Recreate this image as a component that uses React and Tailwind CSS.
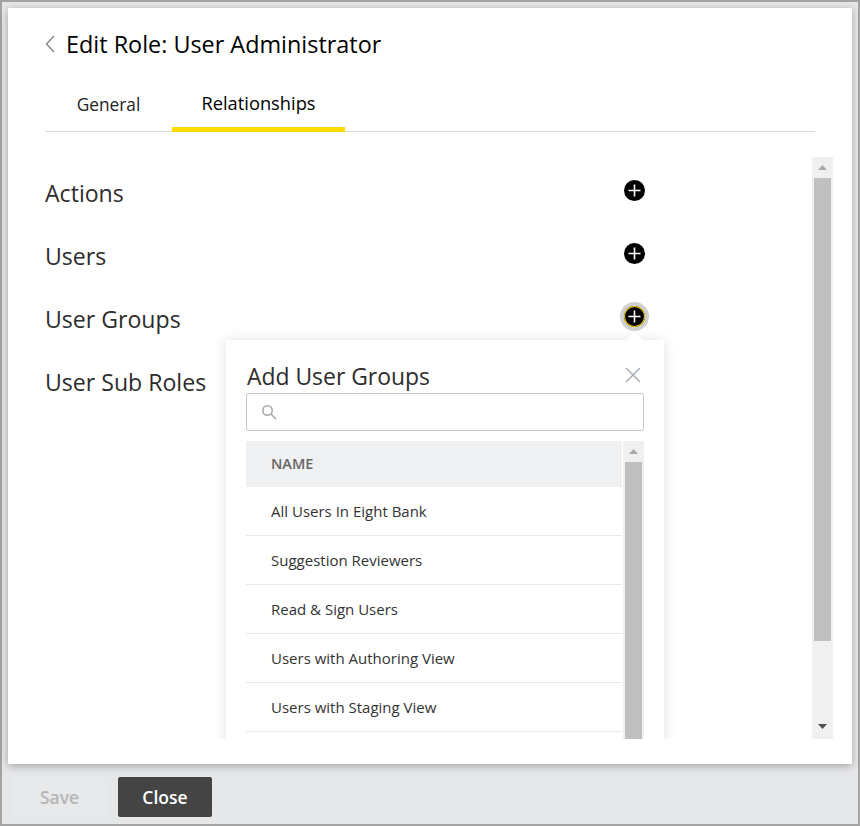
import React from "react";

function Plus({ active }) {
  return (
    <span
      className={
        "flex h-[21px] w-[21px] items-center justify-center rounded-full bg-black mb-[6px] " +
        (active ? "shadow-[inset_0_0_0_1px_#ffd400,0_0_0_4px_#d0d0d0]" : "")
      }
    >
      <svg width="13" height="13" viewBox="0 0 13 13" fill="none" stroke="#fff" strokeWidth="1.6">
        <path d="M6.5 0.5v12M0.5 6.5h12" />
      </svg>
    </span>
  );
}

function Row({ label, active }) {
  return (
    <div className="flex h-[63px] w-[600px] items-center justify-between">
      <span className="text-[23.1px] font-medium text-[#2d2d2d]">{label}</span>
      <Plus active={active} />
    </div>
  );
}

function Arrow({ down, color }) {
  return (
    <svg width="9" height="5" viewBox="0 0 9 5" fill={color}>
      <path d={down ? "M0 0h9L4.5 5z" : "M0 5h9L4.5 0z"} />
    </svg>
  );
}

const groups = [
  "All Users In Eight Bank",
  "Suggestion Reviewers",
  "Read & Sign Users",
  "Users with Authoring View",
  "Users with Staging View",
  "",
];

export default function App() {
  return (
    <div className="flex h-[826px] w-[860px] flex-col border-2 border-[#a3a3a3] bg-[#e6e7e9] font-['Open_Sans',sans-serif]">
      <div className="mx-[6px] mt-[6px] flex h-[756px] flex-col bg-white px-[37px] shadow-[0_2px_8px_rgba(0,0,0,0.3)]">
        <div className="mt-[20px] flex h-[32px] items-center">
          <svg width="10" height="18" viewBox="0 0 10 18" fill="none" stroke="#8a8a8a" strokeWidth="1.5" className="mr-[11px]">
            <path d="M9 1 1.5 9 9 17" />
          </svg>
          <h1 className="text-[23.4px] font-medium leading-[32px] text-black">Edit Role: User Administrator</h1>
        </div>
        <div className="mt-[27px] flex h-[45px] w-[770px] border-b border-[#d8d8d8]">
          <div className="flex w-[127px] justify-center pt-[5px] text-[17.3px] text-[#222]">General</div>
          <div className="flex h-[45px] w-[173px] justify-center border-b-[5px] border-[#ffdb00] pt-[2px] text-[18.3px] font-medium text-black">Relationships</div>
        </div>
        <div className="relative mt-[25px] flex h-[582px] w-[788px] justify-between overflow-hidden">
          <div className="pt-[5px]">
            <Row label="Actions" />
            <Row label="Users" />
            <Row label="User Groups" active />
            <Row label="User Sub Roles" />
          </div>
          <div className="flex w-[21px] flex-col items-center bg-[#f0f0f0]">
            <div className="flex h-[21px] items-center justify-center">
              <Arrow color="#a8a8a8" />
            </div>
            <div className="h-[463px] w-[17px] bg-[#c0c0c0]" />
            <div className="mt-auto mb-[10px] flex justify-center">
              <Arrow down color="#505050" />
            </div>
          </div>
          <div className="absolute left-[181px] top-[183px] w-[438px] bg-white px-[20px] shadow-[0_0_12px_rgba(0,0,0,0.12)]">
            <div className="absolute left-[402px] top-[-6px] h-[12px] w-[12px] rotate-45 bg-white" />
            <div className="relative flex h-[53px] items-end justify-between">
              <h2 className="pl-[1px] text-[22.9px] font-medium leading-[32px] text-[#2d2d2d]">Add User Groups</h2>
              <svg width="16" height="16" viewBox="0 0 16 16" fill="none" stroke="#a3a9b0" strokeWidth="1.4" className="mb-[10px] mr-[3px]">
                <path d="M1 1l14 14M15 1 1 15" />
              </svg>
            </div>
            <div className="relative flex h-[38px] items-center rounded-[2px] border border-[#c8c8c8] pl-[14px]">
              <svg width="16" height="16" viewBox="0 0 16 16" fill="none" stroke="#aaa" strokeWidth="1.6">
                <circle cx="6.5" cy="6.5" r="4.7" />
                <path d="m10 10 5 5" />
              </svg>
            </div>
            <div className="relative mt-[10px] flex">
              <div className="w-[376px]">
                <div className="flex h-[46px] items-center bg-[#eff0f2] pl-[25px] text-[14.5px] font-semibold text-[#666]">NAME</div>
                {groups.map((g, i) => (
                  <div key={i} className="flex h-[49px] items-center border-b border-[#e8e8e8] pl-[25px] text-[15px] text-[#333]">
                    {g}
                  </div>
                ))}
              </div>
              <div className="ml-[1px] flex w-[21px] flex-col items-center bg-[#f0f0f0]">
                <div className="flex h-[21px] items-center justify-center">
                  <Arrow color="#a8a8a8" />
                </div>
                <div className="h-[310px] w-[17px] bg-[#c0c0c0]" />
              </div>
            </div>
          </div>
        </div>
      </div>
      <div className="flex gap-[12px] pl-[11px] pt-[13px]">
        <button className="flex h-[40px] w-[93px] items-center justify-center rounded-[2px] bg-[#e8e9eb] text-[17.5px] font-semibold text-[#b5b5b5]">Save</button>
        <button className="flex h-[40px] w-[94px] items-center justify-center rounded-[2px] bg-[#444] text-[17.5px] font-semibold text-white">Close</button>
      </div>
    </div>
  );
}
